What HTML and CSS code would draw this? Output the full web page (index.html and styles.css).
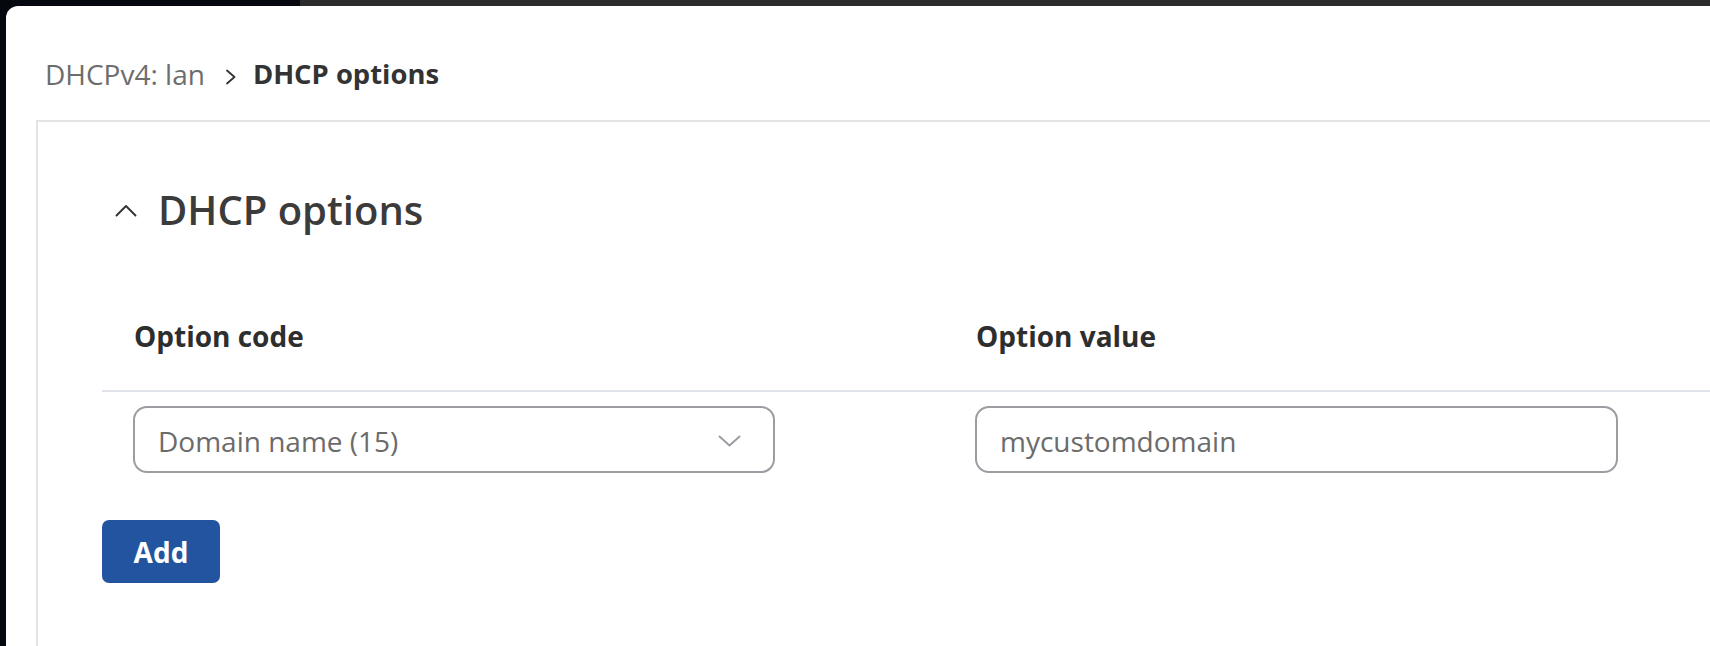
FILE: index.html
```html
<!DOCTYPE html>
<html lang="en">
<head>
<meta charset="utf-8">
<title>DHCP options</title>
<link rel="stylesheet" href="styles.css">
</head>
<body>
  <div class="topbar">
    <div class="topbar-left"></div>
    <div class="topbar-right"></div>
  </div>
  <div class="screen">
    <div class="rail"></div>
    <div class="modal">
      <nav class="breadcrumb">
        <span class="crumb">DHCPv4: lan</span>
        <svg class="crumb-sep" width="14" height="16" viewBox="0 0 14 16" aria-hidden="true">
          <polyline points="3,1.5 10.5,8 3,14.5" fill="none" stroke="#333" stroke-width="1.8" stroke-linecap="round" stroke-linejoin="round"/>
        </svg>
        <span class="crumb-current">DHCP options</span>
      </nav>
      <section class="card">
        <div class="section-head">
          <svg class="collapse" width="22" height="13" viewBox="0 0 22 13" aria-hidden="true">
            <polyline points="1.5,11.5 11,2 20.5,11.5" fill="none" stroke="#333" stroke-width="1.9" stroke-linecap="round" stroke-linejoin="round"/>
          </svg>
          <h2 class="section-title">DHCP options</h2>
        </div>
        <div class="table">
          <div class="table-head">
            <div class="th">Option code</div>
            <div class="th">Option value</div>
          </div>
          <div class="table-row">
            <div class="td">
              <div class="select">
                <span>Domain name (15)</span>
                <svg width="23" height="12" viewBox="0 0 23 12" aria-hidden="true">
                  <polyline points="1.5,1.5 11.5,10.5 21.5,1.5" fill="none" stroke="#9a9ba1" stroke-width="1.9" stroke-linecap="round" stroke-linejoin="round"/>
                </svg>
              </div>
            </div>
            <div class="td">
              <input class="text-input" type="text" value="mycustomdomain">
            </div>
          </div>
          <button class="btn-add" type="button">Add</button>
        </div>
      </section>
    </div>
  </div>
</body>
</html>
```

FILE: styles.css
```css
html, body {
  margin: 0;
  padding: 0;
}

body {
  background: #05090f;
  font-family: "Open Sans", "Noto Sans", sans-serif;
  height: 646px;
  overflow: hidden;
}

.topbar {
  display: flex;
  height: 6px;
}

.topbar-left {
  width: 300px;
}

.topbar-right {
  flex: 1;
  background: #2b2b2b;
}

.screen {
  display: flex;
  height: 640px;
}

.rail {
  width: 6px;
  flex: none;
}

.modal {
  flex: 1;
  background: #ffffff;
  border-top-left-radius: 12px;
  padding: 49px 0 0 30px;
  box-sizing: border-box;
  display: flex;
  flex-direction: column;
  min-width: 0;
}

.breadcrumb {
  display: flex;
  align-items: center;
  padding-left: 9px;
  height: 38px;
  font-size: 28px;
  line-height: 38px;
}

.crumb {
  color: #6d6d6d;
}

.crumb-sep {
  margin: 6px 15px 0 19px;
  flex: none;
}

.crumb-current {
  color: #333333;
  font-weight: 700;
  font-size: 27.4px;
}

.card {
  flex: 1;
  margin-top: 27px;
  border-top: 2px solid #e4e4e4;
  border-left: 2px solid #e4e4e4;
  padding-top: 61px;
}

.section-head {
  display: flex;
  align-items: center;
  gap: 21px;
  padding-left: 77px;
}

.collapse {
  flex: none;
}

.section-title {
  margin: 0;
  font-size: 40px;
  line-height: 54px;
  font-weight: 600;
  color: #3b3b3b;
}

.table {
  margin: 80px 0 0 64px;
}

.table-head,
.table-row {
  display: grid;
  grid-template-columns: 842px 1fr;
}

.table-head {
  padding-bottom: 35px;
  border-bottom: 2px solid #e0e4ea;
}

.th {
  padding-left: 32px;
  font-size: 28px;
  line-height: 38px;
  font-weight: 700;
  color: #2e2e2e;
}

.table-row {
  padding-top: 14px;
}

.td {
  padding-left: 31px;
}

.select,
.text-input {
  box-sizing: border-box;
  width: 643px;
  height: 67px;
  border: 2px solid #9c9da3;
  border-radius: 14px;
  background: #ffffff;
  font-family: "Open Sans", "Noto Sans", sans-serif;
  font-size: 28px;
  color: #6b6b6b;
}

.select {
  width: 642px;
  display: flex;
  align-items: center;
  justify-content: space-between;
  padding: 2px 32px 0 23px;
}

.text-input {
  display: block;
  appearance: none;
  padding: 2px 22px 0 23px;
  margin: 0;
  outline: none;
}

.btn-add {
  display: block;
  margin-top: 47px;
  width: 118px;
  height: 63px;
  border: none;
  border-radius: 7px;
  background: #2354a0;
  color: #ffffff;
  font-family: "Open Sans", "Noto Sans", sans-serif;
  font-size: 28px;
  font-weight: 700;
  padding: 0;
  cursor: pointer;
}
```
